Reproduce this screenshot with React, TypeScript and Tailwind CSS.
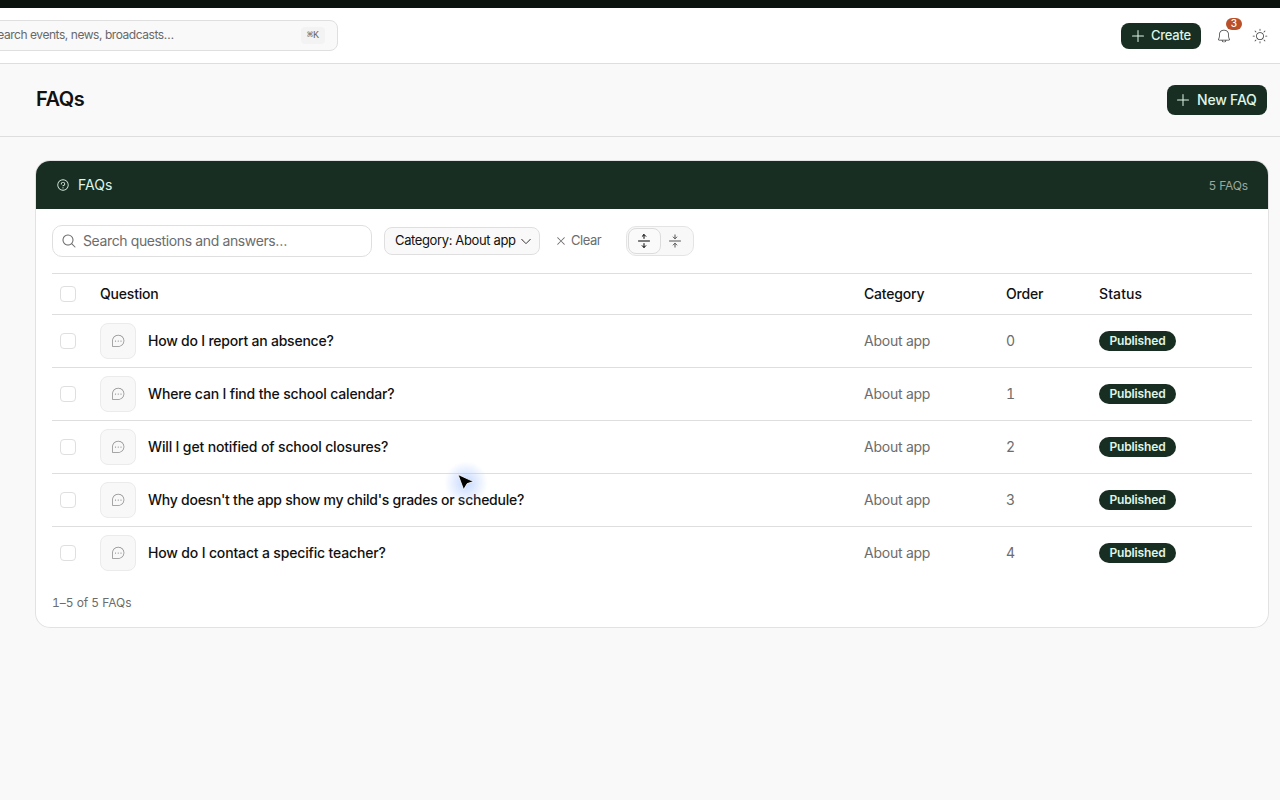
import {
	PiBellLight,
	PiCaretDownLight,
	PiChatTeardropDotsLight,
	PiMagnifyingGlass,
	PiPlus,
	PiQuestion,
	PiSunLight,
	PiX,
} from "react-icons/pi";

const faqs = [
	{
		question: "How do I report an absence?",
		tracking: "tracking-[-0.22px]",
	},
	{
		question: "Where can I find the school calendar?",
		tracking: "tracking-[-0.16px]",
	},
	{
		question: "Will I get notified of school closures?",
		tracking: "tracking-[-0.15px]",
	},
	{
		question: "Why doesn't the app show my child's grades or schedule?",
		tracking: "tracking-[-0.25px]",
	},
	{
		question: "How do I contact a specific teacher?",
		tracking: "tracking-[-0.16px]",
	},
];

function Checkbox() {
	return (
		<div className="size-4 rounded-[4px] border border-[#dfdfdf] bg-white" />
	);
}

function ExpandIcon() {
	return (
		<svg
			width="14"
			height="14"
			viewBox="0 0 14 14"
			fill="none"
			stroke="currentColor"
			strokeWidth="1"
			strokeLinecap="round"
			strokeLinejoin="round"
		>
			<path d="M1.5 7h11M7 4.4V0.6M5.2 2.3L7 0.5l1.8 1.8M7 9.6v3.8M5.2 11.7L7 13.5l1.8-1.8" />
		</svg>
	);
}

function CollapseIcon() {
	return (
		<svg
			width="14"
			height="14"
			viewBox="0 0 14 14"
			fill="none"
			stroke="currentColor"
			strokeWidth="1"
			strokeLinecap="round"
			strokeLinejoin="round"
		>
			<path d="M1.5 7h11M7 0.9v3.8M5.2 3L7 4.8 8.8 3M7 13.1V9.3M5.2 11L7 9.2 8.8 11" />
		</svg>
	);
}

function Topbar() {
	return (
		<header className="flex h-14 items-center justify-between border-b border-[#dedede] bg-white pr-3">
			<div className="-ml-8 flex h-[31px] w-[370px] items-center justify-between rounded-lg border border-[#dfdfdf] bg-[#f9f9f9] pr-3 pl-[21px]">
				<span className="pb-px text-xs tracking-[-0.45px] text-[#686868]">
					Search events, news, broadcasts…
				</span>
				<kbd className="flex h-[17px] w-6 items-center justify-center rounded bg-[#f3f3f3] font-mono text-[10px] text-[#686868]">
					⌘K
				</kbd>
			</div>
			<div className="flex items-center">
				<button className="flex h-[26px] w-20 items-center rounded-lg bg-[#192e22] pl-[9px] text-[13px] font-medium tracking-[-0.25px] text-[#dff5e6]">
					<PiPlus className="mr-[5px] size-4" />
					<span className="pt-px">Create</span>
				</button>
				<div className="relative ml-[15px]">
					<PiBellLight className="size-4 text-[#3a3a3a]" />
					<span className="absolute -top-[10px] left-[10px] flex h-3 w-4 items-center justify-center rounded-full bg-[#b9502a] text-[10px] font-medium text-white">
						3
					</span>
				</div>
				<PiSunLight className="ml-5 size-4 text-[#3a3a3a]" />
			</div>
		</header>
	);
}

function Toolbar() {
	return (
		<div className="flex h-16 items-center px-4">
			<div className="flex h-8 w-80 items-center gap-1.5 rounded-[10px] border border-[#dfdfdf] px-2 text-sm tracking-[-0.38px] text-[#6c6c6c]">
				<PiMagnifyingGlass className="size-4" />
				<span>Search questions and answers…</span>
			</div>
			<button className="ml-3 flex h-7 w-[156px] items-center justify-between rounded-lg border border-[#dfdfdf] bg-[#f9f9f9] pr-1.5 pl-2.5 text-[13px] tracking-[-0.37px] whitespace-nowrap text-[#111]">
				Category: About app
				<PiCaretDownLight className="size-3.5" />
			</button>
			<button className="ml-[15px] flex w-[47px] items-center gap-1 text-[13px] tracking-[-0.45px] text-[#6c6c6c]">
				<PiX className="size-3" />
				Clear
			</button>
			<div className="ml-6 flex h-[30px] w-[68px] items-center rounded-[10px] border border-[#e4e4e4] bg-[#f8f8f8] p-px">
				<div className="flex h-[26px] w-[33px] items-center justify-center rounded-lg border border-[#dcdcdc] bg-[#fafafa] pr-px text-black">
					<ExpandIcon />
				</div>
				<div className="flex flex-1 items-center justify-center pr-[3px] text-[#555]">
					<CollapseIcon />
				</div>
			</div>
		</div>
	);
}

function FaqTable() {
	return (
		<table className="mx-4 w-[1200px] table-fixed border-t border-[#dedede] text-left text-sm">
			<colgroup>
				<col className="w-10" />
				<col className="w-[764px]" />
				<col className="w-[142px]" />
				<col className="w-[93px]" />
				<col />
			</colgroup>
			<thead>
				<tr className="h-[41px] border-b border-[#dedede] tracking-[-0.2px] text-[#111]">
					<th className="px-2">
						<Checkbox />
					</th>
					<th className="px-2 font-medium">Question</th>
					<th className="px-2 font-medium">Category</th>
					<th className="px-2 font-medium">Order</th>
					<th className="px-2 font-medium tracking-[0.1px]">
						Status
					</th>
				</tr>
			</thead>
			<tbody>
				{faqs.map((faq, i) => (
					<tr
						key={faq.question}
						className="h-[53px] border-b border-[#dedede] text-[#6c6c6c] last:border-0"
					>
						<td className="px-2">
							<Checkbox />
						</td>
						<td className="px-2">
							<div className="flex items-center gap-3">
								<div className="flex size-9 items-center justify-center rounded-lg border border-[#ebebeb] bg-[#f8f8f8]">
									<PiChatTeardropDotsLight className="size-4 text-[#8a8a8a]" />
								</div>
								<span
									className={`font-medium text-[#111] ${faq.tracking}`}
								>
									{faq.question}
								</span>
							</div>
						</td>
						<td className="px-2 tracking-[-0.25px]">About app</td>
						<td className="px-2 tabular-nums">{i}</td>
						<td className="px-2">
							<span className="flex h-5 w-[77px] items-center justify-center rounded-full bg-[#192e22] text-xs font-semibold tracking-[-0.15px] text-[#dff5e6]">
								Published
							</span>
						</td>
					</tr>
				))}
			</tbody>
		</table>
	);
}

function Cursor() {
	return (
		<div className="absolute top-[461px] left-[444px] size-11 bg-[radial-gradient(circle,#8fb4ff88_0%,#a9c6ff55_35%,transparent_70%)]">
			<svg
				className="absolute top-3 left-[13px]"
				width="18"
				height="18"
				viewBox="0 0 18 18"
			>
				<path
					d="M1 1.5 L16.5 8.6 L10.2 10.6 L6.6 16.6 Z"
					fill="#000"
					stroke="#fff"
					strokeWidth="0.8"
					strokeLinejoin="round"
				/>
			</svg>
		</div>
	);
}

export default function App() {
	return (
		<div className="relative h-[800px] w-[1280px] overflow-hidden bg-[#f9f9f9] font-[Inter,sans-serif]">
			<div className="h-2 bg-[#0c130d]" />
			<Topbar />
			<div className="flex h-[73px] items-center justify-between border-b border-[#dedede] pr-[13px] pl-9">
				<h1 className="pb-[3px] text-xl font-semibold tracking-[-0.5px] text-[#111]">
					FAQs
				</h1>
				<button className="flex h-[30px] w-[100px] items-center rounded-lg bg-[#192e22] pl-2 text-sm font-medium tracking-[-0.2px] text-[#dff5e6]">
					<PiPlus className="mr-1.5 size-4" />
					New FAQ
				</button>
			</div>
			<section className="mx-9 mt-6 h-[466px] w-[1232px] overflow-hidden rounded-[14px] bg-white ring-1 ring-[#e2e2e2]">
				<div className="flex h-12 items-center justify-between bg-[#192e22] px-5 text-[#dff5e6]">
					<div className="flex items-center gap-2 text-sm">
						<PiQuestion className="size-3.5" />
						FAQs
					</div>
					<span className="pt-px text-xs tracking-[-0.15px] text-[#98a89e]">
						5 FAQs
					</span>
				</div>
				<Toolbar />
				<FaqTable />
				<p className="mt-[15px] px-4 text-xs tracking-[-0.04px] text-[#6c6c6c] tabular-nums">
					1–5 of 5 FAQs
				</p>
			</section>
			<Cursor />
		</div>
	);
}
